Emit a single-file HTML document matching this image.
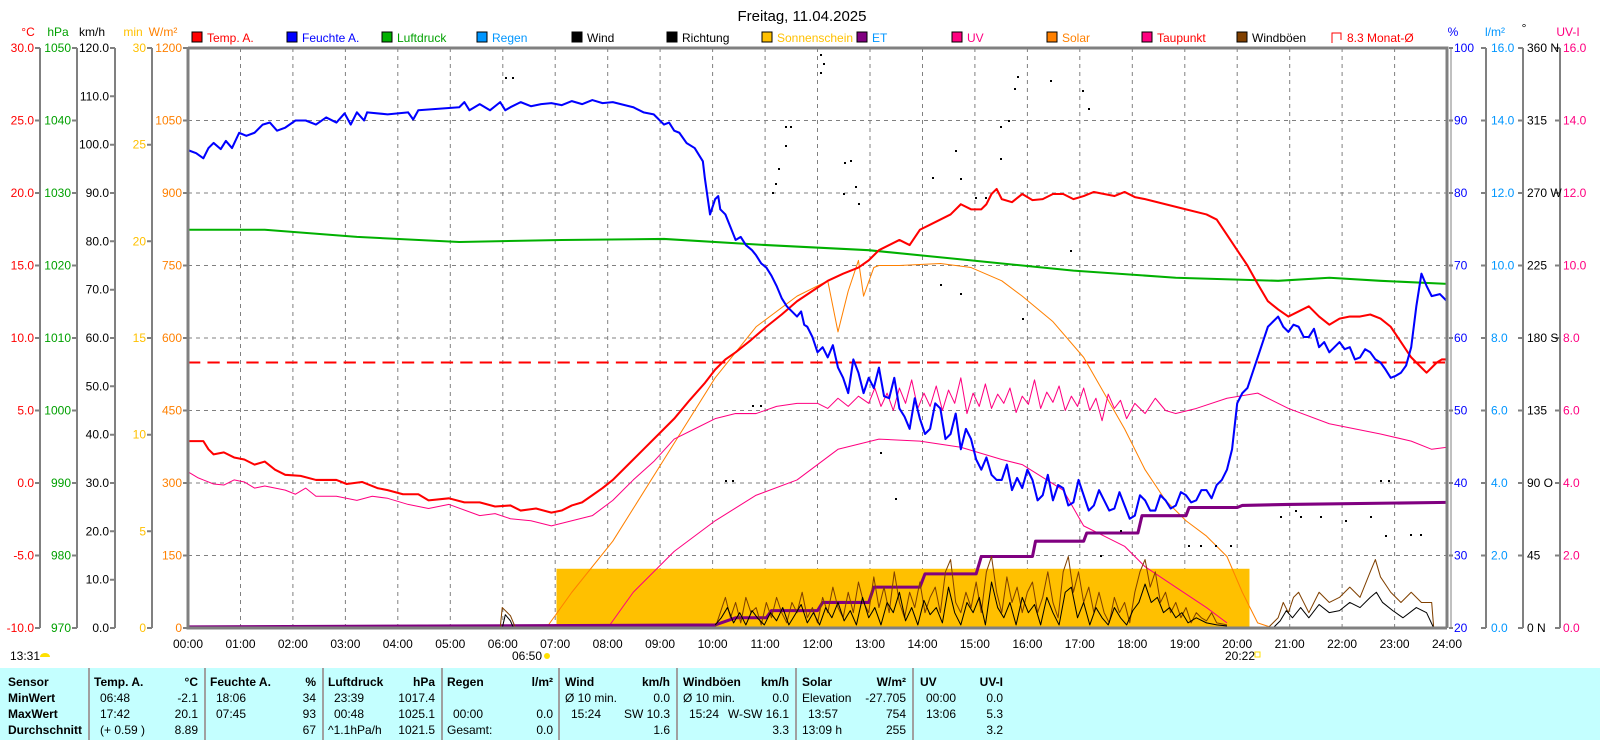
<!DOCTYPE html>
<html><head><meta charset="utf-8">
<style>
body{margin:0;width:1600px;height:740px;background:#fff;overflow:hidden;position:relative;font-family:"Liberation Sans",Arial,sans-serif;}
.tb{position:absolute;left:0;top:668px;width:1600px;height:72px;background:#c4ffff;}
.c{position:absolute;font-size:12px;line-height:14px;white-space:nowrap;color:#000;}
.b{font-weight:bold;}
.sep{position:absolute;top:668px;width:2px;height:72px;background:#a0a0a0;}
</style></head><body>
<svg width="1600" height="668" style="position:absolute;left:0;top:0" font-family="Liberation Sans, Arial, sans-serif" font-size="12">
<text x="802" y="21" text-anchor="middle" font-size="15">Freitag, 11.04.2025</text>
<g font-size="12">
<rect x="192" y="32" width="10" height="10" fill="#f00" stroke="#000"/><text x="207" y="42" fill="#f00">Temp. A.</text>
<rect x="287" y="32" width="10" height="10" fill="#00f" stroke="#000"/><text x="302" y="42" fill="#00f">Feuchte A.</text>
<rect x="382" y="32" width="10" height="10" fill="#00b000" stroke="#000"/><text x="397" y="42" fill="#00a000">Luftdruck</text>
<rect x="477" y="32" width="10" height="10" fill="#0096ff" stroke="#000"/><text x="492" y="42" fill="#0096ff">Regen</text>
<rect x="572" y="32" width="10" height="10" fill="#000" stroke="#000"/><text x="587" y="42">Wind</text>
<rect x="667" y="32" width="10" height="10" fill="#000" stroke="#000"/><text x="682" y="42">Richtung</text>
<rect x="762" y="32" width="10" height="10" fill="#ffc000" stroke="#000"/><text x="777" y="42" fill="#ffc000">Sonnenschein</text>
<rect x="857" y="32" width="10" height="10" fill="#800080" stroke="#000"/><text x="872" y="42" fill="#0096ff">ET</text>
<rect x="952" y="32" width="10" height="10" fill="#ff0080" stroke="#000"/><text x="967" y="42" fill="#ff0080">UV</text>
<rect x="1047" y="32" width="10" height="10" fill="#ff8000" stroke="#000"/><text x="1062" y="42" fill="#ff8000">Solar</text>
<rect x="1142" y="32" width="10" height="10" fill="#ff0080" stroke="#000"/><text x="1157" y="42" fill="#f00">Taupunkt</text>
<rect x="1237" y="32" width="10" height="10" fill="#804000" stroke="#000"/><text x="1252" y="42">Windböen</text>
<path d="M1332 43V33H1341V40" fill="none" stroke="#f00"/><text x="1347" y="42" fill="#f00">8.3 Monat-Ø</text>
</g>
<text x="28" y="36" fill="#f00" text-anchor="middle">°C</text>
<text x="58" y="36" fill="#00a000" text-anchor="middle">hPa</text>
<text x="92" y="36" text-anchor="middle">km/h</text>
<text x="133" y="36" fill="#ffc000" text-anchor="middle">min</text>
<text x="163" y="36" fill="#ff8000" text-anchor="middle">W/m²</text>
<text x="1453" y="36" fill="#00f" text-anchor="middle">%</text>
<text x="1495" y="36" fill="#0096ff" text-anchor="middle">l/m²</text>
<text x="1524" y="32" text-anchor="middle">°</text>
<text x="1568" y="36" fill="#ff0080" text-anchor="middle">UV-I</text>
<g stroke="#808080" stroke-dasharray="4,4" stroke-width="1">
<path d="M240.5 48V628M292.9 48V628M345.4 48V628M397.8 48V628M450.3 48V628M502.8 48V628M555.2 48V628M607.7 48V628M660.1 48V628M712.6 48V628M765.1 48V628M817.5 48V628M870 48V628M922.5 48V628M974.9 48V628M1027.4 48V628M1079.8 48V628M1132.3 48V628M1184.8 48V628M1237.2 48V628M1289.7 48V628M1342.1 48V628M1394.6 48V628"/>
<path d="M188 120.5H1447M188 193H1447M188 265.5H1447M188 338H1447M188 410.5H1447M188 483H1447M188 555.5H1447"/>
</g>
<g stroke="#808080" stroke-width="2" fill="none">
<path d="M40 48V628M77 48V628M115 48V628M152 48V628"/>
<path d="M35 48H40M35 120.5H40M35 193H40M35 265.5H40M35 338H40M35 410.5H40M35 483H40M35 555.5H40M35 628H40"/>
<path d="M72 48H77M72 120.5H77M72 193H77M72 265.5H77M72 338H77M72 410.5H77M72 483H77M72 555.5H77M72 628H77"/>
<path d="M110 48H115M110 96.3H115M110 144.7H115M110 193H115M110 241.3H115M110 289.7H115M110 338H115M110 386.3H115M110 434.7H115M110 483H115M110 531.3H115M110 579.7H115M110 628H115"/>
<path d="M147 48H152M147 144.7H152M147 241.3H152M147 338H152M147 434.7H152M147 531.3H152M147 628H152"/>
<path d="M183 48H188M183 120.5H188M183 193H188M183 265.5H188M183 338H188M183 410.5H188M183 483H188M183 555.5H188M183 628H188"/>
<path d="M1486 48V628M1523 48V628M1560 48V628"/>
<path d="M1449 48H1453M1449 120.5H1453M1449 193H1453M1449 265.5H1453M1449 338H1453M1449 410.5H1453M1449 483H1453M1449 555.5H1453M1449 628H1453"/>
<path d="M1481 48H1486M1481 120.5H1486M1481 193H1486M1481 265.5H1486M1481 338H1486M1481 410.5H1486M1481 483H1486M1481 555.5H1486M1481 628H1486"/>
<path d="M1518 48H1523M1518 120.5H1523M1518 193H1523M1518 265.5H1523M1518 338H1523M1518 410.5H1523M1518 483H1523M1518 555.5H1523M1518 628H1523"/>
<path d="M1555 48H1560M1555 120.5H1560M1555 193H1560M1555 265.5H1560M1555 338H1560M1555 410.5H1560M1555 483H1560M1555 555.5H1560M1555 628H1560"/>
</g>
<g text-anchor="end" fill="#f00">
<text x="34" y="52">30.0</text><text x="34" y="124.5">25.0</text><text x="34" y="197">20.0</text><text x="34" y="269.5">15.0</text><text x="34" y="342">10.0</text><text x="34" y="414.5">5.0</text><text x="34" y="487">0.0</text><text x="34" y="559.5">-5.0</text><text x="34" y="632">-10.0</text>
</g>
<g text-anchor="end" fill="#00a000">
<text x="71" y="52">1050</text><text x="71" y="124.5">1040</text><text x="71" y="197">1030</text><text x="71" y="269.5">1020</text><text x="71" y="342">1010</text><text x="71" y="414.5">1000</text><text x="71" y="487">990</text><text x="71" y="559.5">980</text><text x="71" y="632">970</text>
</g>
<g text-anchor="end" fill="#000">
<text x="109" y="52">120.0</text><text x="109" y="100.3">110.0</text><text x="109" y="148.7">100.0</text><text x="109" y="197">90.0</text><text x="109" y="245.3">80.0</text><text x="109" y="293.7">70.0</text><text x="109" y="342">60.0</text><text x="109" y="390.3">50.0</text><text x="109" y="438.7">40.0</text><text x="109" y="487">30.0</text><text x="109" y="535.3">20.0</text><text x="109" y="583.7">10.0</text><text x="109" y="632">0.0</text>
</g>
<g text-anchor="end" fill="#ffc000">
<text x="146" y="52">30</text><text x="146" y="148.7">25</text><text x="146" y="245.3">20</text><text x="146" y="342">15</text><text x="146" y="438.7">10</text><text x="146" y="535.3">5</text><text x="146" y="632">0</text>
</g>
<g text-anchor="end" fill="#ff8000">
<text x="182" y="52">1200</text><text x="182" y="124.5">1050</text><text x="182" y="197">900</text><text x="182" y="269.5">750</text><text x="182" y="342">600</text><text x="182" y="414.5">450</text><text x="182" y="487">300</text><text x="182" y="559.5">150</text><text x="182" y="632">0</text>
</g>
<g fill="#00f">
<text x="1454" y="52">100</text><text x="1454" y="124.5">90</text><text x="1454" y="197">80</text><text x="1454" y="269.5">70</text><text x="1454" y="342">60</text><text x="1454" y="414.5">50</text><text x="1454" y="487">40</text><text x="1454" y="559.5">30</text><text x="1454" y="632">20</text>
</g>
<g fill="#0096ff">
<text x="1491" y="52">16.0</text><text x="1491" y="124.5">14.0</text><text x="1491" y="197">12.0</text><text x="1491" y="269.5">10.0</text><text x="1491" y="342">8.0</text><text x="1491" y="414.5">6.0</text><text x="1491" y="487">4.0</text><text x="1491" y="559.5">2.0</text><text x="1491" y="632">0.0</text>
</g>
<g fill="#000">
<text x="1527" y="52">360 N</text><text x="1527" y="124.5">315</text><text x="1527" y="197">270 W</text><text x="1527" y="269.5">225</text><text x="1527" y="342">180 S</text><text x="1527" y="414.5">135</text><text x="1527" y="487">90  O</text><text x="1527" y="559.5">45</text><text x="1527" y="632">0    N</text>
</g>
<g fill="#ff0080">
<text x="1563" y="52">16.0</text><text x="1563" y="124.5">14.0</text><text x="1563" y="197">12.0</text><text x="1563" y="269.5">10.0</text><text x="1563" y="342">8.0</text><text x="1563" y="414.5">6.0</text><text x="1563" y="487">4.0</text><text x="1563" y="559.5">2.0</text><text x="1563" y="632">0.0</text>
</g>
<g text-anchor="middle">
<text x="188" y="648">00:00</text><text x="240.5" y="648">01:00</text><text x="292.9" y="648">02:00</text><text x="345.4" y="648">03:00</text><text x="397.8" y="648">04:00</text><text x="450.3" y="648">05:00</text><text x="502.8" y="648">06:00</text><text x="555.2" y="648">07:00</text><text x="607.7" y="648">08:00</text><text x="660.1" y="648">09:00</text><text x="712.6" y="648">10:00</text><text x="765.1" y="648">11:00</text><text x="817.5" y="648">12:00</text><text x="870" y="648">13:00</text><text x="922.5" y="648">14:00</text><text x="974.9" y="648">15:00</text><text x="1027.4" y="648">16:00</text><text x="1079.8" y="648">17:00</text><text x="1132.3" y="648">18:00</text><text x="1184.8" y="648">19:00</text><text x="1237.2" y="648">20:00</text><text x="1289.7" y="648">21:00</text><text x="1342.1" y="648">22:00</text><text x="1394.6" y="648">23:00</text><text x="1447" y="648">24:00</text>
</g>
<text x="10" y="660">13:31</text>
<path d="M40 657a5 4 0 0 1 10 0z" fill="#ffe000"/>
<text x="512" y="660">06:50</text>
<circle cx="547" cy="656" r="3" fill="#ffe000"/>
<text x="1225" y="660">20:22</text>
<rect x="1255" y="652" width="5" height="5" fill="none" stroke="#ffe000"/>
<g transform="translate(188,48) scale(1.0236,1.0211) translate(-185,-47)" fill="none" stroke-linejoin="round">
<rect x="545" y="557" width="677" height="58" fill="#ffc000" stroke="none"/>
<path d="M185 355H1415" stroke="#f00" stroke-width="2" stroke-dasharray="12,7"/>
<path d="M185 225L260 225L350 232L450 237L550 235L650 234L750 240L850 245L950 255L1050 265L1150 272L1250 275L1300 272L1350 275L1415 278" stroke="#00b000" stroke-width="2"/>
<path d="M535 615L560 580L600 530L650 450L700 370L740 320L780 290L810 275L820 325L830 285L840 255L845 290L855 262L860 260L880 260L920 258L950 262L980 275L1000 290L1030 315L1060 350L1080 385L1100 420L1120 460L1140 490L1160 510L1180 525L1200 545L1215 580L1230 610L1245 615" stroke="#ff8000" stroke-width="1"/>
<path d="M185 462L195 468L200 470L210 474L220 475L230 470L240 472L250 478L260 476L280 480L290 484L300 478L310 486L330 486L350 490L365 486L380 488L400 494L420 498L440 494L470 505L485 503L500 508L520 510L540 515L560 510L580 505L600 490L620 470L640 452L660 430L680 420L700 410L720 405L740 405L760 398L780 395L800 395L810 400L820 390L830 398L840 388L850 395L856 380L862 398L868 385L874 402L880 380L886 395L892 372L898 400L904 385L910 398L916 378L922 402L928 382L934 395L940 370L946 405L952 385L958 398L964 376L970 400L976 386L982 395L988 380L994 404L1000 388L1006 396L1012 372L1018 400L1024 384L1030 394L1036 378L1042 402L1048 388L1054 398L1060 380L1066 402L1072 390L1078 412L1084 386L1090 400L1096 392L1102 410L1110 395L1120 405L1130 390L1140 402L1150 405L1170 400L1200 390L1230 385L1260 400L1300 415L1350 425L1380 432L1400 440L1415 438" stroke="#ff0080" stroke-width="1"/>
<path d="M595 615L620 580L660 540L700 510L740 485L780 470L820 440L860 430L900 432L940 438L980 450L1000 455L1040 480L1060 515L1080 525L1100 535L1120 555L1150 575L1180 595L1200 610" stroke="#ff0080" stroke-width="1"/>
<path d="M185 614L700 612L720 605L750 605L755 598L800 598L805 590L850 590L855 575L900 575L905 562L955 562L960 545L1010 545L1013 530L1060 530L1063 522L1113 522L1117 505L1160 505L1163 497L1210 497L1215 495L1260 494L1415 492" stroke="#800080" stroke-width="3"/>
<path d="M490 615L492 595L497 600L500 603L505 615M700 615L705 600L710 585L715 605L720 590L725 610L730 585L735 600L740 595L745 612L750 590L755 605L760 585L765 600L770 610L775 590L780 600L785 580L790 605L795 595L800 610L805 585L810 600L815 575L820 595L825 605L830 580L835 600L840 570L845 590L850 600L855 565L860 595L865 575L870 600L875 560L880 590L885 605L890 580L895 595L900 570L905 600L910 585L915 575L920 600L925 560L930 548L935 590L940 600L945 580L950 595L955 570L960 600L965 560L970 545L975 580L980 600L985 565L990 590L995 575L1000 600L1005 580L1010 570L1015 600L1020 585L1025 560L1030 590L1035 605L1040 560L1045 545L1050 580L1055 560L1060 590L1065 575L1070 600L1075 580L1080 600L1085 610L1090 585L1095 600L1100 590L1105 610L1110 580L1115 560L1120 548L1125 575L1130 560L1135 590L1140 580L1145 600L1150 590L1155 605L1160 595L1165 610L1170 600L1175 605L1180 608L1185 600L1190 610L1200 612M1240 615L1250 605L1255 590L1260 600L1265 585L1270 580L1275 590L1280 600L1290 580L1300 590L1310 585L1320 575L1330 585L1340 560L1345 548L1350 565L1360 580L1370 590L1380 580L1390 590L1400 590L1402 615" stroke="#804000" stroke-width="1"/>
<path d="M492 615L495 602L500 608L503 615M700 612L706 605L712 595L718 610L724 600L730 612L736 598L742 606L748 612L754 600L760 608L766 595L772 612L778 602L784 592L790 610L796 600L802 612L808 595L814 605L820 590L826 608L832 598L838 612L844 585L850 605L856 595L862 612L868 590L874 600L880 580L886 608L892 595L898 612L904 588L910 602L916 595L922 610L928 575L934 600L940 612L946 590L952 600L958 585L964 612L970 570L976 595L982 605L988 590L994 612L1000 585L1006 600L1012 592L1018 612L1024 585L1030 600L1036 612L1042 580L1048 575L1054 605L1060 590L1066 612L1072 595L1078 605L1084 612L1090 595L1096 605L1102 612L1108 598L1114 590L1120 572L1126 590L1132 585L1138 600L1144 595L1150 605L1156 600L1162 610L1170 605L1180 610L1190 612L1200 613M1245 615L1252 608L1258 598L1264 605L1272 595L1280 605L1290 592L1300 600L1310 598L1320 590L1330 595L1340 585L1346 580L1352 590L1362 598L1372 605L1385 595L1395 600L1402 615" stroke="#000" stroke-width="1"/>
<path d="M185 432L200 432L205 440L210 445L220 443L230 448L240 450L250 455L260 452L270 460L280 465L295 466L310 470L330 470L340 474L355 472L370 478L380 480L395 484L410 484L420 490L440 488L455 492L470 492L485 496L500 495L510 500L525 498L540 502L550 500L560 495L570 492L580 485L590 478L600 470L615 455L630 440L645 425L660 410L675 392L690 375L700 362L710 352L720 345L735 333L750 320L765 308L780 295L795 285L810 275L825 268L840 262L850 255L860 245L870 240L880 235L890 240L900 225L910 220L920 215L930 210L940 200L950 205L960 205L965 200L970 190L975 185L980 195L990 198L1000 190L1010 196L1020 195L1030 190L1040 190L1050 195L1060 192L1070 188L1080 190L1090 192L1100 188L1110 193L1120 195L1140 200L1160 205L1180 210L1190 215L1200 230L1210 245L1220 260L1230 278L1240 295L1250 303L1260 310L1270 305L1280 300L1290 310L1300 318L1310 312L1320 310L1330 310L1340 308L1350 312L1360 320L1370 335L1380 350L1390 360L1395 365L1400 360L1405 355L1410 352L1415 352" stroke="#f00" stroke-width="2"/>
<path d="M185 147L193 150L200 155L205 145L210 140L217 146L222 138L228 145L235 130L242 133L250 130L258 122L265 120L272 128L280 125L290 118L300 118L310 122L320 115L330 120L338 111L344 122L350 110L357 118L360 110L380 112L400 110L405 117L410 108L450 105L455 100L460 108L470 102L480 108L490 100L495 108L500 105L510 100L520 104L530 102L540 101L550 103L560 99L570 102L580 98L590 101L600 100L620 105L630 110L640 112L650 122L655 120L660 128L665 130L672 140L680 145L688 158L690 175L695 210L700 195L703 192L705 205L710 210L716 225L720 235L725 232L730 240L736 245L740 250L745 258L750 262L755 270L760 280L765 292L770 300L775 305L780 310L784 305L787 318L790 320L795 330L800 345L805 340L810 350L815 338L820 360L825 370L830 385L835 352L840 365L845 385L850 370L855 380L860 360L865 388L870 390L875 370L880 400L885 408L890 420L895 390L900 410L905 425L910 420L915 395L920 400L925 430L930 425L935 405L940 440L945 420L950 430L955 450L960 460L965 448L970 465L975 470L980 470L985 455L990 480L995 468L1000 478L1005 460L1010 470L1015 490L1020 485L1025 465L1030 490L1035 475L1040 478L1045 495L1050 492L1055 470L1060 485L1065 500L1070 495L1075 480L1080 490L1085 500L1090 498L1095 482L1100 495L1105 508L1110 505L1115 485L1120 490L1125 500L1130 500L1135 485L1140 490L1145 498L1150 495L1155 482L1160 485L1165 492L1170 490L1175 480L1180 480L1185 488L1190 475L1195 470L1200 460L1205 440L1210 395L1215 385L1220 380L1225 365L1230 350L1235 335L1240 320L1245 315L1250 310L1255 320L1260 325L1265 318L1270 320L1275 330L1280 330L1285 322L1290 340L1295 335L1300 345L1305 340L1310 335L1315 342L1320 340L1325 352L1330 350L1335 342L1340 345L1345 352L1350 355L1355 362L1360 370L1365 368L1370 365L1375 358L1380 340L1385 300L1390 268L1395 280L1400 290L1408 288L1415 295" stroke="#00f" stroke-width="2"/>
<path d="M185 614.5H1415" stroke="#0096ff" stroke-width="2"/>
</g>
<g fill="#000">
<rect x="505" y="77" width="2" height="2"/><rect x="512" y="77" width="2" height="2"/><rect x="820" y="54" width="2" height="2"/><rect x="823" y="63" width="2" height="2"/><rect x="820" y="72" width="2" height="2"/><rect x="785" y="126" width="2" height="2"/><rect x="790" y="126" width="2" height="2"/><rect x="785" y="145" width="2" height="2"/><rect x="778" y="168" width="2" height="2"/><rect x="775" y="183" width="2" height="2"/><rect x="772" y="192" width="2" height="2"/><rect x="844" y="162" width="2" height="2"/><rect x="850" y="160" width="2" height="2"/><rect x="855" y="186" width="2" height="2"/><rect x="843" y="193" width="2" height="2"/><rect x="858" y="203" width="2" height="2"/><rect x="932" y="177" width="2" height="2"/><rect x="955" y="150" width="2" height="2"/><rect x="960" y="178" width="2" height="2"/><rect x="975" y="197" width="2" height="2"/><rect x="985" y="197" width="2" height="2"/><rect x="1008" y="120" width="2" height="2"/><rect x="1014" y="88" width="2" height="2"/><rect x="1017" y="76" width="2" height="2"/><rect x="1050" y="80" width="2" height="2"/><rect x="1082" y="90" width="2" height="2"/><rect x="1088" y="108" width="2" height="2"/><rect x="1070" y="250" width="2" height="2"/><rect x="1022" y="318" width="2" height="2"/><rect x="1000" y="126" width="2" height="2"/><rect x="1000" y="158" width="2" height="2"/><rect x="940" y="284" width="2" height="2"/><rect x="960" y="293" width="2" height="2"/><rect x="752" y="405" width="2" height="2"/><rect x="760" y="405" width="2" height="2"/><rect x="725" y="480" width="2" height="2"/><rect x="732" y="480" width="2" height="2"/><rect x="895" y="498" width="2" height="2"/><rect x="880" y="452" width="2" height="2"/><rect x="1280" y="516" width="2" height="2"/><rect x="1300" y="516" width="2" height="2"/><rect x="1320" y="516" width="2" height="2"/><rect x="1345" y="520" width="2" height="2"/><rect x="1370" y="516" width="2" height="2"/><rect x="1385" y="535" width="2" height="2"/><rect x="1410" y="534" width="2" height="2"/><rect x="1420" y="534" width="2" height="2"/><rect x="1380" y="480" width="2" height="2"/><rect x="1388" y="480" width="2" height="2"/><rect x="1295" y="510" width="2" height="2"/><rect x="1188" y="545" width="2" height="2"/><rect x="1200" y="545" width="2" height="2"/><rect x="1215" y="545" width="2" height="2"/><rect x="1230" y="545" width="2" height="2"/><rect x="1120" y="530" width="2" height="2"/><rect x="1100" y="555" width="2" height="2"/>
</g>
<path d="M188 48V628H1447M188 48H1447V628" fill="none" stroke="#808080" stroke-width="3"/>
<path d="M1451 48V628" stroke="#808080" stroke-width="1"/>
</svg>
<div class="tb"></div>
<div class="sep" style="left:88px"></div><div class="sep" style="left:204px"></div><div class="sep" style="left:322px"></div><div class="sep" style="left:441px"></div><div class="sep" style="left:558px"></div><div class="sep" style="left:676px"></div><div class="sep" style="left:795px"></div><div class="sep" style="left:912px"></div>
<div class="c b" style="left:8px;top:675px">Sensor</div>
<div class="c b" style="left:8px;top:691px">MinWert</div>
<div class="c b" style="left:8px;top:707px">MaxWert</div>
<div class="c b" style="left:8px;top:723px">Durchschnitt</div>
<div class="c b" style="left:94px;top:675px">Temp. A.</div><div class="c b" style="left:160px;width:38px;text-align:right;top:675px">°C</div>
<div class="c" style="left:100px;top:691px">06:48</div><div class="c" style="left:150px;width:48px;text-align:right;top:691px">-2.1</div>
<div class="c" style="left:100px;top:707px">17:42</div><div class="c" style="left:150px;width:48px;text-align:right;top:707px">20.1</div>
<div class="c" style="left:100px;top:723px">(+ 0.59 )</div><div class="c" style="left:150px;width:48px;text-align:right;top:723px">8.89</div>
<div class="c b" style="left:210px;top:675px">Feuchte A.</div><div class="c b" style="left:270px;width:46px;text-align:right;top:675px">%</div>
<div class="c" style="left:216px;top:691px">18:06</div><div class="c" style="left:270px;width:46px;text-align:right;top:691px">34</div>
<div class="c" style="left:216px;top:707px">07:45</div><div class="c" style="left:270px;width:46px;text-align:right;top:707px">93</div>
<div class="c" style="left:270px;width:46px;text-align:right;top:723px">67</div>
<div class="c b" style="left:328px;top:675px">Luftdruck</div><div class="c b" style="left:390px;width:45px;text-align:right;top:675px">hPa</div>
<div class="c" style="left:334px;top:691px">23:39</div><div class="c" style="left:380px;width:55px;text-align:right;top:691px">1017.4</div>
<div class="c" style="left:334px;top:707px">00:48</div><div class="c" style="left:380px;width:55px;text-align:right;top:707px">1025.1</div>
<div class="c" style="left:328px;top:723px">^1.1hPa/h</div><div class="c" style="left:380px;width:55px;text-align:right;top:723px">1021.5</div>
<div class="c b" style="left:447px;top:675px">Regen</div><div class="c b" style="left:510px;width:43px;text-align:right;top:675px">l/m²</div>
<div class="c" style="left:453px;top:707px">00:00</div><div class="c" style="left:510px;width:43px;text-align:right;top:707px">0.0</div>
<div class="c" style="left:447px;top:723px">Gesamt:</div><div class="c" style="left:510px;width:43px;text-align:right;top:723px">0.0</div>
<div class="c b" style="left:565px;top:675px">Wind</div><div class="c b" style="left:620px;width:50px;text-align:right;top:675px">km/h</div>
<div class="c" style="left:565px;top:691px">Ø 10 min.</div><div class="c" style="left:620px;width:50px;text-align:right;top:691px">0.0</div>
<div class="c" style="left:571px;top:707px">15:24</div><div class="c" style="left:610px;width:60px;text-align:right;top:707px">SW 10.3</div>
<div class="c" style="left:620px;width:50px;text-align:right;top:723px">1.6</div>
<div class="c b" style="left:683px;top:675px">Windböen</div><div class="c b" style="left:740px;width:49px;text-align:right;top:675px">km/h</div>
<div class="c" style="left:683px;top:691px">Ø 10 min.</div><div class="c" style="left:740px;width:49px;text-align:right;top:691px">0.0</div>
<div class="c" style="left:689px;top:707px">15:24</div><div class="c" style="left:720px;width:69px;text-align:right;top:707px">W-SW 16.1</div>
<div class="c" style="left:740px;width:49px;text-align:right;top:723px">3.3</div>
<div class="c b" style="left:802px;top:675px">Solar</div><div class="c b" style="left:860px;width:46px;text-align:right;top:675px">W/m²</div>
<div class="c" style="left:802px;top:691px">Elevation</div><div class="c" style="left:850px;width:56px;text-align:right;top:691px">-27.705</div>
<div class="c" style="left:808px;top:707px">13:57</div><div class="c" style="left:850px;width:56px;text-align:right;top:707px">754</div>
<div class="c" style="left:802px;top:723px">13:09 h</div><div class="c" style="left:850px;width:56px;text-align:right;top:723px">255</div>
<div class="c b" style="left:920px;top:675px">UV</div><div class="c b" style="left:960px;width:43px;text-align:right;top:675px">UV-I</div>
<div class="c" style="left:926px;top:691px">00:00</div><div class="c" style="left:960px;width:43px;text-align:right;top:691px">0.0</div>
<div class="c" style="left:926px;top:707px">13:06</div><div class="c" style="left:960px;width:43px;text-align:right;top:707px">5.3</div>
<div class="c" style="left:960px;width:43px;text-align:right;top:723px">3.2</div>
</body></html>
